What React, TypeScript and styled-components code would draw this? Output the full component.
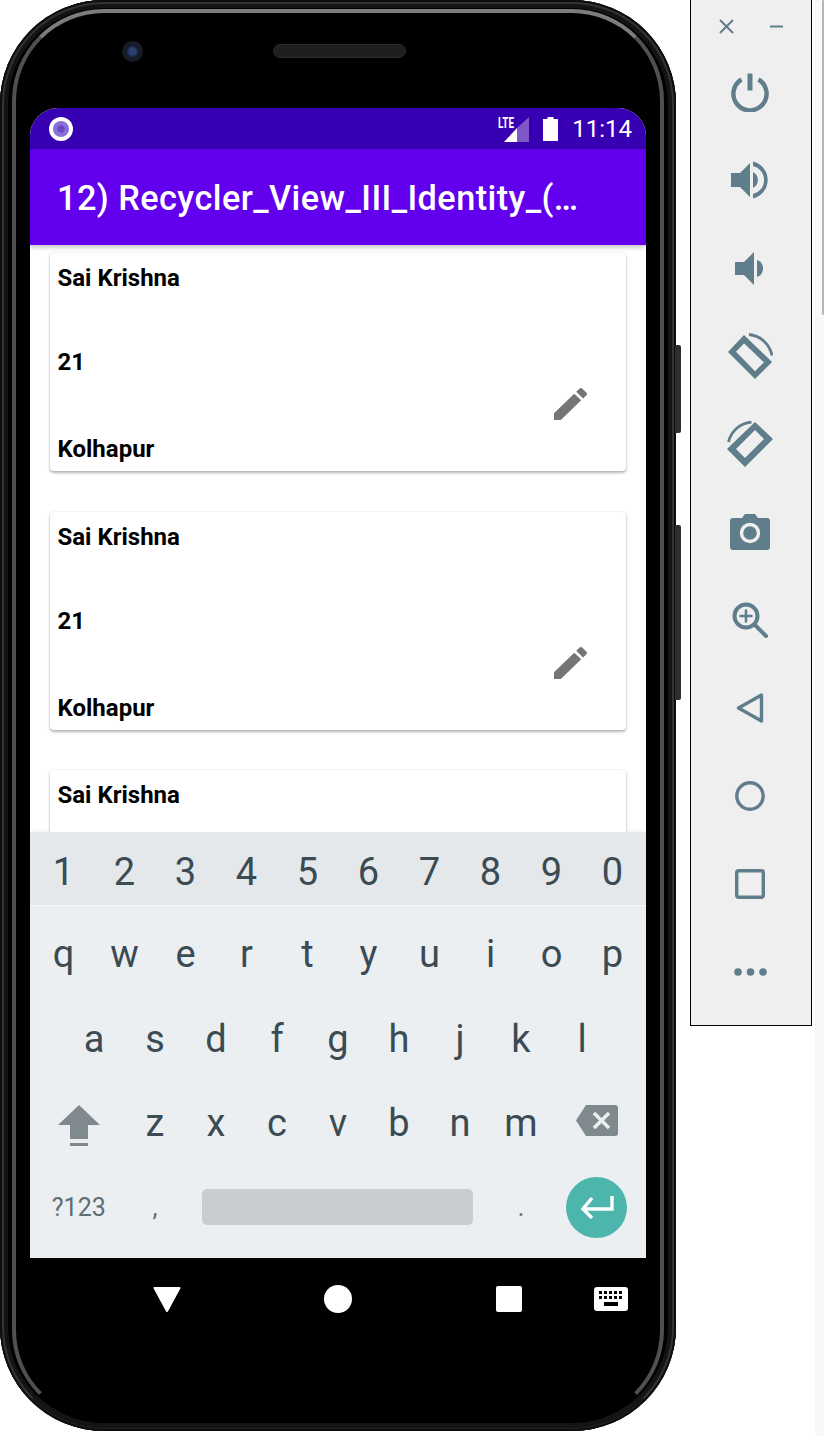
import React from 'react';
import styled, { createGlobalStyle } from 'styled-components';

const GlobalStyle = createGlobalStyle`
  html, body {
    margin: 0;
    padding: 0;
    background: #ffffff;
    font-family: 'Roboto', 'Liberation Sans', sans-serif;
  }
`;

const Page = styled.div`
  display: flex;
  align-items: flex-start;
  width: 824px;
  height: 1436px;
  overflow: hidden;
  background: #ffffff;
`;

/* phone */

const Phone = styled.div`
  position: relative;
  flex: none;
  box-sizing: border-box;
  width: 676px;
  height: 1431px;
  padding: 108px 30px 0;
  border-radius: 104px;
  background: #000000;
  box-shadow: inset 0 0 0 2px #0e0e0e, inset 0 0 0 3px #222222, inset 0 0 0 8px #141414;

  &::before {
    content: '';
    position: absolute;
    inset: 2px;
    border-radius: 102px;
    border: 2px solid #333333;
    border-bottom-color: transparent;
    pointer-events: none;
  }

  &::after {
    content: '';
    position: absolute;
    inset: 9px 12px 9px;
    border-radius: 92px;
    border: 4px solid #505050;
    border-top-color: #7c7c7c;
    border-bottom-color: transparent;
    pointer-events: none;
  }
`;

const Camera = styled.div`
  position: absolute;
  left: 122px;
  top: 41px;
  width: 21px;
  height: 21px;
  border-radius: 50%;
  background: radial-gradient(circle, #2b3f72 0 22%, #151b2b 42%, #1c1e22 100%);
`;

const Speaker = styled.div`
  position: absolute;
  left: 273px;
  top: 44px;
  width: 133px;
  height: 14px;
  border-radius: 7px;
  background: #1f1f1f;
  border: 1px solid #2a2a2a;
  box-sizing: border-box;
`;

const SideKey = styled.div<{ $top: number; $height: number }>`
  position: absolute;
  left: 675px;
  top: ${(p) => p.$top}px;
  width: 6px;
  height: ${(p) => p.$height}px;
  border-radius: 0 2px 2px 0;
  background: #2e2e2e;
`;

const Screen = styled.div`
  position: relative;
  display: flex;
  flex-direction: column;
  width: 616px;
  height: 1150px;
  border-radius: 28px 28px 0 0;
  overflow: hidden;
  background: #ffffff;
`;

const StatusBar = styled.div`
  display: flex;
  align-items: center;
  flex: none;
  height: 41px;
  padding: 0 14px 0 19px;
  background: #3700b3;
`;

const StatusRight = styled.div`
  display: flex;
  align-items: center;
  margin-left: auto;
`;

const BatteryIcon = styled.svg`
  margin-left: 13px;
`;

const StatusTime = styled.span`
  margin-left: 14px;
  color: #ffffff;
  font-size: 24px;
  line-height: 30px;
`;

const AppBar = styled.div`
  position: relative;
  z-index: 1;
  display: flex;
  align-items: center;
  flex: none;
  box-sizing: border-box;
  height: 96px;
  padding: 2px 0 0 27px;
  background: #6200ee;
  box-shadow: 0 2px 5px rgba(0, 0, 0, 0.25);
`;

const AppTitle = styled.h1`
  margin: 0;
  color: #ffffff;
  font-size: 34.3px;
  font-weight: 500;
  line-height: 42px;
  letter-spacing: 0.43px;
  white-space: nowrap;
`;

const CardList = styled.div`
  flex: 1;
  min-height: 0;
  display: flex;
  flex-direction: column;
  gap: 40.5px;
  padding: 8px 20px 0;
  overflow: hidden;
`;

const Card = styled.div`
  position: relative;
  flex: none;
  display: grid;
  grid-template-rows: 84px 87px 30px;
  box-sizing: border-box;
  height: 218px;
  padding: 10px 7.5px 0;
  border-radius: 4px;
  background: #ffffff;
  box-shadow: 0 2px 3px rgba(0, 0, 0, 0.28), 0 0 2px rgba(0, 0, 0, 0.14);
`;

const CardText = styled.div`
  color: #000000;
  font-size: 24px;
  font-weight: 700;
  line-height: 30px;
`;

const EditButton = styled.div`
  position: absolute;
  right: 39px;
  top: 135px;
  width: 33px;
  height: 32px;
`;

/* keyboard */

const Keyboard = styled.div`
  flex: none;
  height: 426px;
  background: #eceff2;
  box-shadow: 0 -2px 2px rgba(245, 245, 245, 0.9);
`;

const NumberRow = styled.div`
  display: grid;
  grid-template-columns: repeat(20, 1fr);
  box-sizing: border-box;
  height: 74px;
  padding: 6px 3px 0;
  background: #e4e8eb;
  border-bottom: 1px solid #f4f6f7;
`;

const KeyRows = styled.div`
  padding: 6px 3px 0;
`;

const KeyRow = styled.div`
  display: grid;
  grid-template-columns: repeat(20, 1fr);
  height: 84.4px;
`;

const Key = styled.div<{ $span?: number }>`
  display: flex;
  align-items: center;
  justify-content: center;
  grid-column: span ${(p) => p.$span ?? 2};
  color: #3b4b53;
  font-size: 38px;
  line-height: 44px;
`;

const ShiftKey = styled(Key)`
  padding-top: 7px;
`;

const BackspaceKey = styled(Key)`
  padding-bottom: 5px;
`;

const ModeKey = styled(Key)`
  padding-top: 1px;
  color: #5f6d74;
  font-size: 25px;
`;

const SpaceBar = styled.div`
  width: 271px;
  height: 36px;
  margin-right: 2px;
  border-radius: 5px;
  background: #c8cdd0;
`;

const EnterCircle = styled.div`
  display: flex;
  align-items: center;
  justify-content: center;
  width: 61px;
  height: 61px;
  margin-right: 1px;
  border-radius: 50%;
  background: #4db6ac;
`;

const NavBar = styled.div`
  display: grid;
  grid-template-columns: repeat(3, 171px) 34px;
  align-items: center;
  justify-items: center;
  height: 82px;
  padding-left: 51px;
`;

/* emulator toolbar */

const ToolPanel = styled.div`
  flex: none;
  box-sizing: border-box;
  width: 122px;
  height: 1026px;
  margin-left: 14px;
  padding-right: 2px;
  border: 1px solid #000000;
  border-top: none;
  background: #efefef;
`;

const ToolHeader = styled.div`
  display: flex;
  align-items: center;
  justify-content: space-between;
  height: 48px;
  padding: 4px 25px 0 28px;
  box-sizing: border-box;
`;

const ToolButton = styled.div`
  display: flex;
  align-items: center;
  justify-content: center;
  height: 88px;
`;

const ScrollTrack = styled.div`
  flex: none;
  position: relative;
  width: 9px;
  height: 100%;
  margin-left: 3px;
  background: #f8f8f8;
`;

const ScrollThumb = styled.div`
  position: absolute;
  top: 0;
  right: 0;
  width: 2px;
  height: 315px;
  border-radius: 1px;
  background: #b5b5b5;
`;

const TOOL = '#607d8b';

const PencilIcon = () => (
  <svg width="33" height="32" viewBox="3 3 18 18" preserveAspectRatio="none">
    <path fill="#757575" d="M3 17.25V21h3.75L17.81 9.94l-3.75-3.75L3 17.25zM20.71 7.04c.39-.39.39-1.02 0-1.41l-2.34-2.34c-.39-.39-1.02-.39-1.41 0l-1.83 1.83 3.75 3.75 1.83-1.83z" />
  </svg>
);

const Icons: Record<string, React.ReactNode> = {
  power: (
    <svg width="40" height="40" viewBox="0 0 40 40" fill="none" stroke={TOOL} strokeWidth="4.4">
      <path d="M11.5 7.5a16.6 16.6 0 1 0 17 0" />
      <path d="M20 1.5v17" strokeWidth="5" />
    </svg>
  ),
  volumeUp: (
    <svg width="40" height="38" viewBox="0 0 40 38" fill={TOOL}>
      <path d="M1 12h9L20 2v34L10 26H1z" />
      <path d="M23 11a9 9 0 0 1 0 16z" />
      <path d="M23 0.5a19 19 0 0 1 0 37v-4.4a14.5 14.5 0 0 0 0-28.2z" />
    </svg>
  ),
  volumeDown: (
    <svg width="30" height="33" viewBox="0 0 30 33" fill={TOOL}>
      <path d="M0 10h9L19 0v33L9 23H0z" />
      <path d="M22 8a9 9 0 0 1 0 17z" />
    </svg>
  ),
  rotateRight: (
    <svg width="46" height="46" viewBox="0 0 46 46">
      <path
        fill={TOOL}
        stroke={TOOL}
        strokeWidth="1.5"
        strokeLinejoin="round"
        fillRule="evenodd"
        d="M2 19L17 3l27 26-16 16zM8 18.7L17 9.3 38 29.3 28 39.3z"
      />
      <path d="M22 1.5a26 26 0 0 1 23 21" fill="none" stroke={TOOL} strokeWidth="2.8" />
    </svg>
  ),
  rotateLeft: (
    <svg width="46" height="46" viewBox="0 0 46 46">
      <path
        fill={TOOL}
        stroke={TOOL}
        strokeWidth="1.5"
        strokeLinejoin="round"
        fillRule="evenodd"
        d="M1 28L28 2l17 16-27 27zM8 28L28 8 38 18 18 38z"
      />
      <path d="M1.5 21a26 26 0 0 1 23-20" fill="none" stroke={TOOL} strokeWidth="2.8" />
    </svg>
  ),
  camera: (
    <svg width="40" height="36" viewBox="0 0 40 36">
      <path fill={TOOL} d="M3 4h9l3-4h10l3 4h9a3 3 0 0 1 3 3v26a3 3 0 0 1-3 3H3a3 3 0 0 1-3-3V7a3 3 0 0 1 3-3z" />
      <circle cx="20" cy="19" r="8.5" fill="none" stroke="#efefef" strokeWidth="3.4" />
    </svg>
  ),
  zoom: (
    <svg width="36" height="36" viewBox="0 0 36 36" fill="none" stroke={TOOL} strokeLinecap="round">
      <circle cx="14" cy="14" r="11.5" strokeWidth="4" />
      <path d="M23 23l11 11" strokeWidth="4" />
      <path d="M14 8.5v11M8.5 14h11" strokeWidth="2.6" />
    </svg>
  ),
  back: (
    <svg width="28" height="30" viewBox="0 0 28 30" fill="none" stroke={TOOL} strokeWidth="3.4" strokeLinejoin="round">
      <path d="M2.5 15L25.5 2v26z" />
    </svg>
  ),
  home: (
    <svg width="30" height="30" viewBox="0 0 30 30" fill="none" stroke={TOOL} strokeWidth="3.4">
      <circle cx="15" cy="15" r="13.2" />
    </svg>
  ),
  square: (
    <svg width="30" height="30" viewBox="0 0 30 30" fill="none" stroke={TOOL} strokeWidth="3.4">
      <rect x="1.7" y="1.7" width="26.6" height="26.6" rx="2" />
    </svg>
  ),
  more: (
    <svg width="33" height="8" viewBox="0 0 33 8" fill={TOOL}>
      <circle cx="4" cy="4" r="3.8" />
      <circle cx="16.5" cy="4" r="3.8" />
      <circle cx="29" cy="4" r="3.8" />
    </svg>
  ),
};

const toolNames = ['power', 'volumeUp', 'volumeDown', 'rotateRight', 'rotateLeft', 'camera', 'zoom', 'back', 'home', 'square', 'more'];

const numberKeys = '1234567890'.split('');
const topKeys = 'qwertyuiop'.split('');
const middleKeys = 'asdfghjkl'.split('');
const bottomKeys = 'zxcvbnm'.split('');

const ItemCard = () => (
  <Card>
    <CardText>Sai Krishna</CardText>
    <CardText>21</CardText>
    <CardText>Kolhapur</CardText>
    <EditButton>
      <PencilIcon />
    </EditButton>
  </Card>
);

const App = () => (
  <Page>
    <GlobalStyle />
    <Phone>
      <Camera />
      <Speaker />
      <SideKey $top={345} $height={88} />
      <SideKey $top={525} $height={175} />
      <Screen>
        <StatusBar>
          <svg width="24" height="24" viewBox="0 0 24 24">
            <circle cx="12" cy="12" r="12" fill="#ffffff" />
            <circle cx="12" cy="12" r="8" fill="#8a6fd8" />
            <circle cx="12" cy="12" r="3.6" fill="#6a45c8" />
          </svg>
          <StatusRight>
            <svg width="32" height="26" viewBox="0 0 32 26">
              <path d="M31 1v25H19V12z" fill="#7e57c8" />
              <path d="M6 26l13-14v14z" fill="#ffffff" />
              <text x="0" y="11.5" fill="#ffffff" fontFamily="Roboto" fontSize="14" fontWeight="700" textLength="16" lengthAdjust="spacingAndGlyphs">LTE</text>
            </svg>
            <BatteryIcon width="15" height="24" viewBox="0 0 15 24">
              <path d="M4.5 0h6v2H15v22H0V2h4.5z" fill="#ffffff" />
            </BatteryIcon>
            <StatusTime>11:14</StatusTime>
          </StatusRight>
        </StatusBar>
        <AppBar>
          <AppTitle>12) Recycler_View_III_Identity_(…</AppTitle>
        </AppBar>
        <CardList>
          <ItemCard />
          <ItemCard />
          <ItemCard />
        </CardList>
        <Keyboard>
          <NumberRow>
            {numberKeys.map((k) => (
              <Key key={k}>{k}</Key>
            ))}
          </NumberRow>
          <KeyRows>
            <KeyRow>
              {topKeys.map((k) => (
                <Key key={k}>{k}</Key>
              ))}
            </KeyRow>
            <KeyRow>
              <Key $span={1} />
              {middleKeys.map((k) => (
                <Key key={k}>{k}</Key>
              ))}
            </KeyRow>
            <KeyRow>
              <ShiftKey $span={3}>
                <svg width="42" height="42" viewBox="0 0 42 42" fill="#80898e">
                  <path d="M21 0l21 20H30v14H12V20H0z" />
                  <rect x="12" y="38" width="18" height="3" />
                </svg>
              </ShiftKey>
              {bottomKeys.map((k) => (
                <Key key={k}>{k}</Key>
              ))}
              <BackspaceKey $span={3}>
                <svg width="42" height="31" viewBox="0 0 42 31">
                  <path d="M10 0h29a3 3 0 0 1 3 3v25a3 3 0 0 1-3 3H10L0 15.5z" fill="#80898e" />
                  <path d="M18 8l15 15M33 8L18 23" stroke="#eceff2" strokeWidth="3.6" />
                </svg>
              </BackspaceKey>
            </KeyRow>
            <KeyRow>
              <ModeKey $span={3}>?123</ModeKey>
              <ModeKey>,</ModeKey>
              <Key $span={10}>
                <SpaceBar />
              </Key>
              <ModeKey>.</ModeKey>
              <Key $span={3}>
                <EnterCircle>
                  <svg width="34" height="24" viewBox="0 0 34 24" fill="none" stroke="#ffffff" strokeWidth="3.4">
                    <path d="M32 1v13H3" />
                    <path d="M12 3L3 14l9 9" />
                  </svg>
                </EnterCircle>
              </Key>
            </KeyRow>
          </KeyRows>
        </Keyboard>
      </Screen>
      <NavBar>
        <svg width="28" height="25" viewBox="0 0 28 25">
          <path d="M1.5 1h25L14 24z" fill="#ffffff" stroke="#ffffff" strokeWidth="2" strokeLinejoin="round" />
        </svg>
        <svg width="28" height="28" viewBox="0 0 28 28">
          <circle cx="14" cy="14" r="14" fill="#ffffff" />
        </svg>
        <svg width="26" height="26" viewBox="0 0 26 26">
          <rect width="26" height="26" rx="2" fill="#ffffff" />
        </svg>
        <svg width="34" height="24" viewBox="0 0 34 24">
          <rect width="34" height="24" rx="3" fill="#ffffff" />
          <path fill="#000000" d="M5 4h3v3H5zM10 4h3v3h-3zM15 4h3v3h-3zM20 4h3v3h-3zM25 4h3v3h-3zM5 9h3v3H5zM10 9h3v3h-3zM15 9h3v3h-3zM20 9h3v3h-3zM25 9h3v3h-3zM10 15h14v4H10z" />
        </svg>
      </NavBar>
    </Phone>
    <ToolPanel>
      <ToolHeader>
        <svg width="15" height="15" viewBox="0 0 15 15" stroke={TOOL} strokeWidth="2">
          <path d="M1 1l13 13M14 1L1 14" />
        </svg>
        <svg width="15" height="15" viewBox="0 0 15 15" stroke={TOOL} strokeWidth="2">
          <path d="M1 7.5h13" />
        </svg>
      </ToolHeader>
      {toolNames.map((name) => (
        <ToolButton key={name}>{Icons[name]}</ToolButton>
      ))}
    </ToolPanel>
    <ScrollTrack>
      <ScrollThumb />
    </ScrollTrack>
  </Page>
);

export default App;
